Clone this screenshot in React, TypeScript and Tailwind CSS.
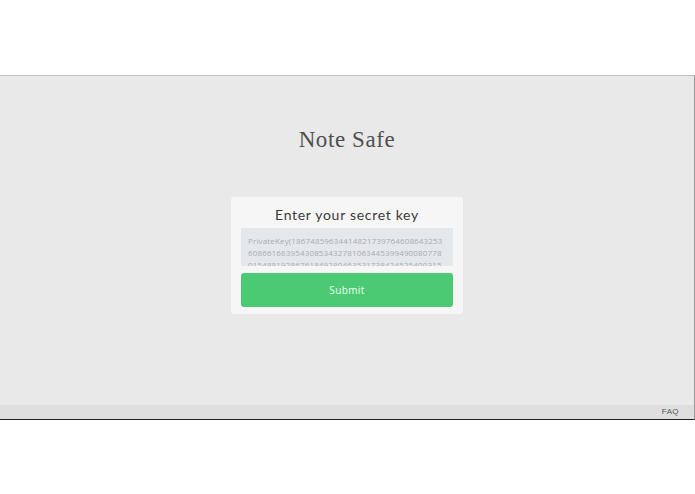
export default function App() {
  const key =
    "PrivateKey(186748596344148217397646086432536086616639543085343278106344539949008077801548819286761849280463531738424525400315324619";

  return (
    <div className="w-[695px] h-[494px] bg-white" style={{ fontFamily: "'Liberation Sans', sans-serif" }}>
      <div className="h-[75px]" />
      <div className="h-[345px] flex flex-col border-t border-t-[#bdbdbd] border-r border-r-[#9a9a9a] border-b border-b-[#222]">
        <main className="flex-1 bg-[#e9e9e9] flex flex-col items-center">
          <h1 className="mt-[50px] text-[23px] leading-[28px] text-[#4f4f4f] font-['Liberation_Serif',serif] font-normal tracking-[0.6px]">
            Note Safe
          </h1>
          <div className="mt-[43px] w-[232px] bg-[#f6f6f6] rounded-[3px] px-[10px] pt-[8px] pb-[7px] flex flex-col">
            <p className="text-center text-[14px] leading-[19px] text-[#3a3a3a] font-['Lato',sans-serif] tracking-[0.7px]">
              Enter your secret key
            </p>
            <div className="mt-[4px] h-[38px] overflow-hidden bg-[#e5e8eb] px-[7px] pt-[7px]">
              <p className="text-[8px] leading-[12px] text-[#a6acb1] break-all font-['Open_Sans',sans-serif] tracking-[0.15px]">
                {key}
              </p>
            </div>
            <button className="mt-[7px] h-[34px] rounded-[3px] bg-[#4cca73] text-[#effff4] text-[10px] font-normal font-['Open_Sans',sans-serif] tracking-[0.4px]">
              Submit
            </button>
          </div>
        </main>
        <footer className="h-[14px] bg-[#dedede] flex items-center justify-end pr-[15px]">
          <span className="text-[8px] text-[#555] tracking-[0.4px]">FAQ</span>
        </footer>
      </div>
    </div>
  );
}
